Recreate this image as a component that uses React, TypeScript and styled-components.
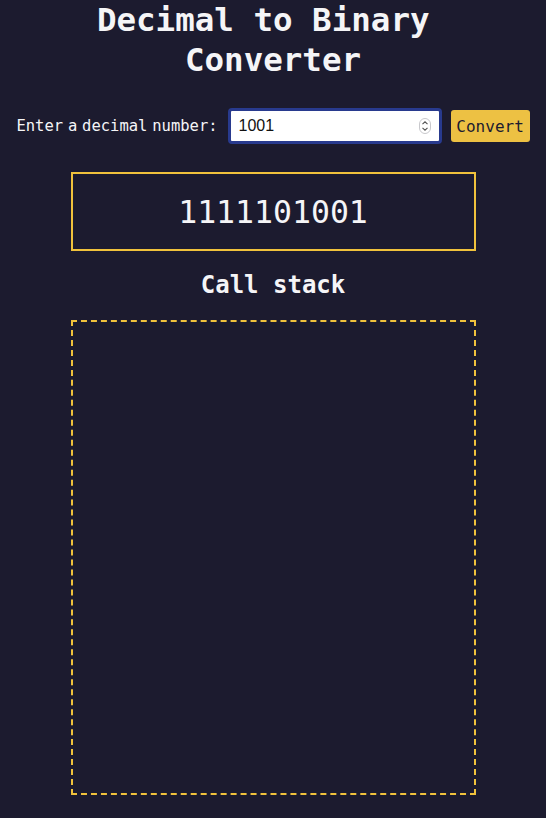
import { useState } from "react";
import styled, { createGlobalStyle } from "styled-components";

const GlobalStyle = createGlobalStyle`
  html, body {
    margin: 0;
    padding: 0;
    background-color: #1c1b2f;
  }
  body {
    font-family: "DejaVu Sans Mono", "Liberation Mono", monospace;
    color: #f5f5f7;
  }
`;

const toBinary = (n: number): string => {
  if (n < 2) return String(n);
  return toBinary(Math.floor(n / 2)) + String(n % 2);
};

const App = () => {
  const [value, setValue] = useState("1001");
  const [result, setResult] = useState(toBinary(1001));

  const convertClickHandle = () => {
    const n = parseInt(value, 10);
    if (!Number.isNaN(n) && n >= 0) setResult(toBinary(n));
  };

  return (
    <PageLayer>
      <GlobalStyle />
      <Title>
        Decimal to Binary{"\u00a0"}
        <br />
        Converter
      </Title>
      <FormRow>
        <Label htmlFor="decimal">Enter a decimal number:</Label>
        <InputWrapper>
          <NumberInput id="decimal" type="text" value={value} onChange={(e) => setValue(e.target.value)} />
          <Spinner width="12" height="16" viewBox="0 0 12 16">
            <rect x="0.5" y="0.5" width="11" height="15" rx="5.5" fill="#fff" stroke="#c8c8cc" />
            <path d="M3.5 6.2 L6 3.8 L8.5 6.2" fill="none" stroke="#555" strokeWidth="1.1" />
            <path d="M3.5 9.8 L6 12.2 L8.5 9.8" fill="none" stroke="#555" strokeWidth="1.1" />
          </Spinner>
        </InputWrapper>
        <ConvertButton onClick={convertClickHandle}>Convert</ConvertButton>
      </FormRow>
      <ResultBox>{result}</ResultBox>
      <SubTitle>Call stack</SubTitle>
      <StackBox />
    </PageLayer>
  );
};

const PageLayer = styled.div`
  display: flex;
  flex-direction: column;
  align-items: center;
  min-height: 818px;
`;

const Title = styled.h1`
  margin: 0;
  font: bold 32.5px/40px "DejaVu Sans Mono", monospace;
  text-align: center;
  color: #f5f5f7;
`;

const FormRow = styled.div`
  display: flex;
  align-items: center;
  margin-top: 28px;
`;

const Label = styled.label`
  font: 15.5px "DejaVu Sans Mono", monospace;
  word-spacing: -4.5px;
  color: #f5f5f7;
  margin-right: 10px;
`;

const InputWrapper = styled.div`
  position: relative;
  display: flex;
  align-items: center;
  width: 214px;
  height: 36px;
  box-sizing: border-box;
  border: 3px solid #283a8e;
  border-radius: 4px;
  background-color: #fff;
`;

const NumberInput = styled.input`
  width: 100%;
  height: 100%;
  box-sizing: border-box;
  border: none;
  outline: none;
  padding: 0 8px;
  background: transparent;
  font: 16px "Liberation Sans", Arial, sans-serif;
  color: #111;
`;

const Spinner = styled.svg`
  position: absolute;
  right: 8px;
  top: 7px;
`;

const ConvertButton = styled.button`
  margin-left: 9px;
  width: 79px;
  height: 32px;
  border: none;
  border-radius: 3px;
  background-color: #edc143;
  font: 16px "DejaVu Sans Mono", monospace;
  color: #1c1b2f;
  padding: 0;
  cursor: pointer;
`;

const ResultBox = styled.div`
  display: flex;
  justify-content: center;
  align-items: center;
  margin-top: 28px;
  width: 405px;
  height: 79px;
  box-sizing: border-box;
  border: 2px solid #f0c23c;
  font: 31.5px "DejaVu Sans Mono", monospace;
  color: #f5f5f7;
`;

const SubTitle = styled.h2`
  margin: 20px 0 0;
  font: bold 24px/28px "DejaVu Sans Mono", monospace;
  color: #f5f5f7;
`;

const StackBox = styled.div`
  margin-top: 21px;
  width: 405px;
  height: 475px;
  box-sizing: border-box;
  border: 2px dashed #f0c23c;
`;

export default App;
